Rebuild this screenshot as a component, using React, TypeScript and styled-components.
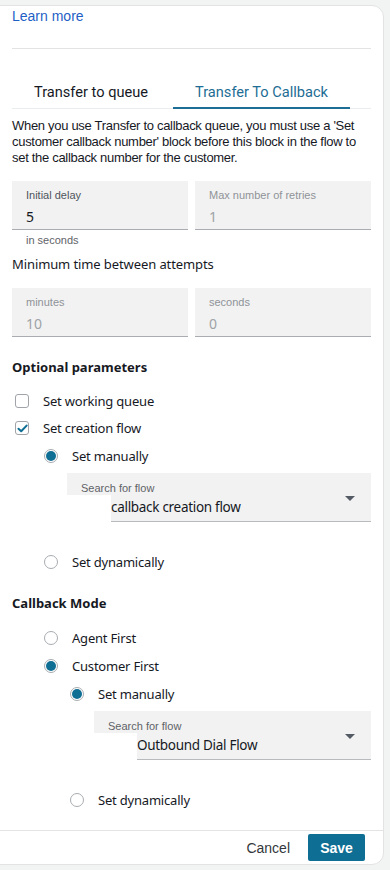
import React from "react";
import styled, { createGlobalStyle } from "styled-components";

const Global = createGlobalStyle`
  html, body { margin: 0; padding: 0; background: #f2f3f3; }
  body { font-family: "Noto Sans", "Liberation Sans", sans-serif; color: #16191f; }
  * { box-sizing: border-box; }
`;

const Page = styled.div`
  width: 390px;
  height: 870px;
  overflow: hidden;
  padding-top: 5px;
`;

const Panel = styled.div`
  margin-left: -1px;
  width: 385px;
  height: 860px;
  background: #fff;
  border: 1px solid #e3e3e3;
  border-radius: 0 12px 12px 0;
  display: flex;
  flex-direction: column;
  overflow: hidden;
`;

const Body = styled.div`
  flex: 1;
  padding: 2px 12px 0 12px;
  display: flex;
  flex-direction: column;
`;

const Link = styled.a`
  font-family: "Liberation Sans", sans-serif;
  font-size: 14px;
  line-height: 16px;
  color: #1f5fc6;
  text-decoration: none;
`;

const Divider = styled.div`
  margin-top: 24px;
  height: 1px;
  background: #e3e3e3;
`;

const TabBar = styled.div`
  margin-top: 26px;
  display: flex;
  border-bottom: 1px solid #eaeded;
`;

const Tab = styled.div<{ $active?: boolean }>`
  font-family: Roboto, sans-serif;
  font-size: 14.6px;
  line-height: 18px;
  padding: 8px 22px 6px;
  color: ${(p) => (p.$active ? "#1d6d94" : "#16191f")};
  border-bottom: 2px solid ${(p) => (p.$active ? "#1d6d94" : "transparent")};
  margin-bottom: -1px;
  & + & { margin-left: 3px; }
`;

const Description = styled.p`
  margin: 9px 0 0;
  font-family: "Liberation Sans", sans-serif;
  font-size: 13px;
  line-height: 16px;
  letter-spacing: -0.3px;
  color: #16191f;
`;

const FieldGrid = styled.div<{ $top: number }>`
  margin-top: ${(p) => p.$top}px;
  display: grid;
  grid-template-columns: 1fr 1fr;
  column-gap: 7px;
`;

const Field = styled.div`
  height: 49px;
  background: #f2f2f2;
  border-bottom: 1px solid #a9acb0;
  padding: 8px 14px 0;
  display: flex;
  flex-direction: column;
`;

const FieldLabel = styled.span<{ $disabled?: boolean }>`
  font-family: "Liberation Sans", sans-serif;
  font-size: 11px;
  line-height: 13px;
  color: ${(p) => (p.$disabled ? "#8f9398" : "#4f555c")};
`;

const FieldValue = styled.span<{ $disabled?: boolean }>`
  margin-top: 6px;
  font-size: 14px;
  line-height: 18px;
  color: ${(p) => (p.$disabled ? "#9ea3a8" : "#16191f")};
`;

const Hint = styled.div`
  margin: 3px 0 0 14px;
  font-family: "Liberation Sans", sans-serif;
  font-size: 11px;
  line-height: 14px;
  color: #5f6368;
`;

const SubTitle = styled.div`
  margin-top: 8px;
  font-size: 13px;
  line-height: 18px;
  letter-spacing: -0.1px;
`;

const SectionTitle = styled.div<{ $top: number }>`
  margin-top: ${(p) => p.$top}px;
  font-size: 13px;
  line-height: 18px;
  font-weight: 700;
`;

const OptionRow = styled.div<{ $indent: number; $top: number }>`
  margin-top: ${(p) => p.$top}px;
  padding-left: ${(p) => p.$indent}px;
  display: flex;
  align-items: center;
  gap: 14px;
  font-size: 13px;
  line-height: 18px;
  letter-spacing: -0.2px;
`;

const CheckBox = styled.span<{ $checked?: boolean }>`
  width: 14px;
  height: 14px;
  border: 1px solid #a0a4a8;
  border-radius: 3px;
  background: #fff;
  display: flex;
  align-items: center;
  justify-content: center;
`;

const Radio = styled.span<{ $checked?: boolean }>`
  width: 14px;
  height: 14px;
  border-radius: 50%;
  border: 1px solid #a8acb0;
  background: #fff;
  display: flex;
  align-items: center;
  justify-content: center;
  &::after {
    content: "";
    width: 10px;
    height: 10px;
    border-radius: 50%;
    background: ${(p) => (p.$checked ? "#0f6e94" : "transparent")};
  }
`;

const SelectBox = styled.div<{ $indent: number; $top: number; $notch: number }>`
  margin-top: ${(p) => p.$top}px;
  margin-left: ${(p) => p.$indent}px;
  display: flex;
  flex-direction: column;
  & > div:last-child { padding-left: ${(p) => p.$notch}px; }
`;

const SelectLabelRow = styled.div`
  height: 22px;
  background: #f2f2f2;
  padding: 9px 0 0 14px;
  font-family: "Liberation Sans", sans-serif;
  font-size: 11px;
  line-height: 13px;
  color: #5f6368;
`;

const SelectFieldWrap = styled.div`
  display: flex;
`;

const SelectField = styled.div`
  flex: 1;
  height: 27px;
  background: #f2f2f2;
  border-bottom: 1px solid #b8bbbe;
  display: flex;
  align-items: flex-start;
  justify-content: space-between;
  padding-right: 16px;
  font-size: 13.5px;
  line-height: 24px;
  letter-spacing: -0.3px;
  color: #16191f;
`;

const Caret = styled.span`
  margin-top: 1px;
  width: 0;
  height: 0;
  border-left: 5px solid transparent;
  border-right: 5px solid transparent;
  border-top: 5px solid #545b64;
`;

const Footer = styled.div`
  height: 34px;
  border-top: 1px solid #e3e3e3;
  display: flex;
  align-items: center;
  justify-content: flex-end;
  gap: 18px;
  padding-right: 18px;
`;

const CancelButton = styled.button`
  border: none;
  background: none;
  padding: 0;
  font-family: "Liberation Sans", sans-serif;
  font-size: 14px;
  color: #33373b;
`;

const SaveButton = styled.button`
  width: 57px;
  height: 27px;
  border: none;
  border-radius: 2px;
  background: #0f6e94;
  color: #fff;
  font-family: "Liberation Sans", sans-serif;
  font-weight: 700;
  font-size: 14px;
`;

const Check = () => (
  <svg width="11" height="9" viewBox="0 0 11 9">
    <path d="M1.5 4.8 L4.2 7.3 L9.6 1.6" fill="none" stroke="#0f6e94" strokeWidth="2" strokeLinecap="round" strokeLinejoin="round" />
  </svg>
);

type SelectProps = { indent: number; top: number; notch: number; value: string };
const FlowSelect = ({ indent, top, notch, value }: SelectProps) => (
  <SelectBox $indent={indent} $top={top} $notch={notch}>
    <SelectLabelRow>Search for flow</SelectLabelRow>
    <SelectFieldWrap>
      <SelectField>
        <span>{value}</span>
        <Caret />
      </SelectField>
    </SelectFieldWrap>
  </SelectBox>
);

export default function App() {
  return (
    <Page>
      <Global />
      <Panel>
        <Body>
          <Link href="#">Learn more</Link>
          <Divider />
          <TabBar>
            <Tab>Transfer to queue</Tab>
            <Tab $active>Transfer To Callback</Tab>
          </TabBar>
          <Description>
            When you use Transfer to callback queue, you must use a 'Set customer callback number' block before this block in the flow to set the callback number for the customer.
          </Description>
          <FieldGrid $top={15}>
            <Field>
              <FieldLabel>Initial delay</FieldLabel>
              <FieldValue>5</FieldValue>
            </Field>
            <Field>
              <FieldLabel $disabled>Max number of retries</FieldLabel>
              <FieldValue $disabled>1</FieldValue>
            </Field>
          </FieldGrid>
          <Hint>in seconds</Hint>
          <SubTitle>Minimum time between attempts</SubTitle>
          <FieldGrid $top={15}>
            <Field>
              <FieldLabel $disabled>minutes</FieldLabel>
              <FieldValue $disabled>10</FieldValue>
            </Field>
            <Field>
              <FieldLabel $disabled>seconds</FieldLabel>
              <FieldValue $disabled>0</FieldValue>
            </Field>
          </FieldGrid>
          <SectionTitle $top={21}>Optional parameters</SectionTitle>
          <OptionRow $indent={3} $top={16}>
            <CheckBox />
            <span>Set working queue</span>
          </OptionRow>
          <OptionRow $indent={3} $top={9}>
            <CheckBox $checked>
              <Check />
            </CheckBox>
            <span>Set creation flow</span>
          </OptionRow>
          <OptionRow $indent={32} $top={10}>
            <Radio $checked />
            <span>Set manually</span>
          </OptionRow>
          <FlowSelect indent={55} top={8} notch={44} value="callback creation flow" />
          <OptionRow $indent={32} $top={31}>
            <Radio />
            <span>Set dynamically</span>
          </OptionRow>
          <SectionTitle $top={23}>Callback Mode</SectionTitle>
          <OptionRow $indent={32} $top={17}>
            <Radio />
            <span>Agent First</span>
          </OptionRow>
          <OptionRow $indent={32} $top={10}>
            <Radio $checked />
            <span>Customer First</span>
          </OptionRow>
          <OptionRow $indent={58} $top={10}>
            <Radio $checked />
            <span>Set manually</span>
          </OptionRow>
          <FlowSelect indent={82} top={8} notch={43} value="Outbound Dial Flow" />
          <OptionRow $indent={58} $top={31}>
            <Radio />
            <span>Set dynamically</span>
          </OptionRow>
        </Body>
        <Footer>
          <CancelButton>Cancel</CancelButton>
          <SaveButton>Save</SaveButton>
        </Footer>
      </Panel>
    </Page>
  );
}
